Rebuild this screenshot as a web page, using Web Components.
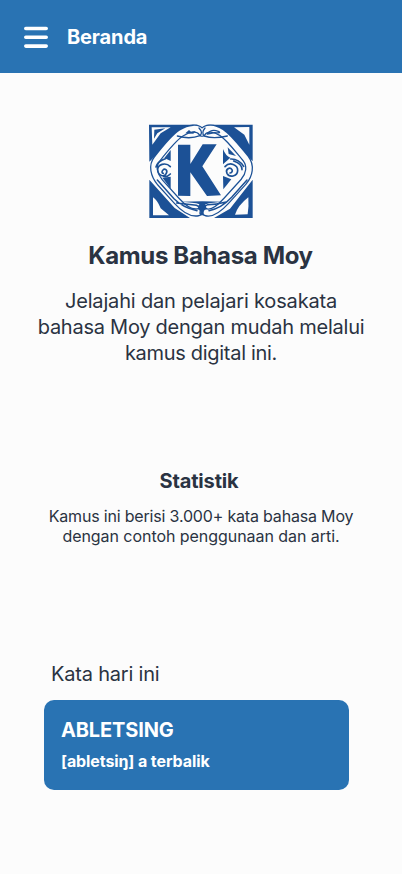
<!DOCTYPE html>
<html lang="id">
<head>
<meta charset="utf-8">
<title>Kamus Bahasa Moy</title>
<style>
body{margin:0;background:#fcfcfc;color:#2a3342;font-family:Inter,"Noto Sans",sans-serif}
</style>
</head>
<body>
<moy-app></moy-app>
<script>
const define=(name,html)=>customElements.define(name,class extends HTMLElement{
  constructor(){super();this.attachShadow({mode:'open'}).innerHTML=html;}
});

define('text-line',`<style>:host{display:block;white-space:nowrap}</style><slot></slot>`);

define('app-bar',`<style>
:host{display:flex;align-items:center;gap:19px;height:73px;padding-left:24px;box-sizing:border-box;background:#2973b3;color:#fff}
svg{display:block}
.t{font-size:20px;line-height:26px;font-weight:650;letter-spacing:-.14px}
</style>
<svg width="24" height="24" viewBox="0 0 24 24" stroke="#fff" stroke-width="3.6" stroke-linecap="round"><path d="M1.8 3.5H22.2M1.8 12.3H22.2M1.8 21.1H22.2"/></svg>
<div class="t"><slot></slot></div>`);

define('moy-logo',`<style>:host{display:block;width:124px;height:112px}svg{display:block}</style>
<svg width="124" height="112" viewBox="-3 -1 372 336" fill="none" stroke-linecap="round" stroke-linejoin="round">
<g fill="#1c5196">
<path d="M27 28H172L112 58L28 139Z"/>
<path d="M202 28H338V138L262 60Z"/>
<path d="M28 193L104 278L150 308H28Z"/>
<path d="M338 193V308H222L270 280Z"/>
</g>
<g fill="#fcfcfc">
<path d="M35 36H92L62 54L37 88Z"/><path d="M282 36L328 35V88L313 58Z"/>
<path d="M39 246Q52 254 62 279L87 300H39Z"/><path d="M325 246Q327 275 323 297L285 298Q294 270 325 246Z"/>
</g>
<path fill="#1c5196" d="M43 43L76 39L52 54L42 70Z"/>
<g transform="translate(11 0) scale(.94 1)">
<path d="M186 52C174 34 145 38 120 53C95 68 70 98 42 132C26 151 32 178 52 201L105 256C127 279 150 295 173 291C184 289 187 282 187 276M187 52C199 34 226 38 248 51C274 67 301 102 326 130C343 151 338 178 319 199L264 256C242 279 218 295 200 291C189 289 187 282 187 276" stroke="#1c5196" stroke-width="25"/>
<path d="M186 52C174 34 145 38 120 53C95 68 70 98 42 132C26 151 32 178 52 201L105 256C127 279 150 295 173 291M187 52C199 34 226 38 248 51C274 67 301 102 326 130C343 151 338 178 319 199L264 256C242 279 218 295 200 291" stroke="#fcfcfc" stroke-width="17"/>
</g>
<g stroke="#1c5196" stroke-width="4">
<path d="M112 62Q150 73 180 61Q190 52 177 38M262 62Q220 72 193 62Q183 53 195 38"/>
<path d="M202 56Q213 40 235 48Q246 54 224 52L202 56"/>
<path d="M52 194L102 250Q127 276 171 286M321 194L275 246Q243 280 207 286M259 260Q228 268 203 268Q187 274 184 296M110 263L169 270Q184 275 180 294" stroke-width="4.5"/>
</g>
<g fill="#1c5196">
<path d="M136 54L147 44L153 49L167 47L160 55Z"/>
<path d="M114 88H151V146L188 87H230L187 153L243 240L201 242L151 171V242L114 241Z"/>
<path d="M92 104V137L73 128Z"/><path d="M92 184V220L67 187Z"/>
<path d="M249 101Q257 122 271 127L249 147Z"/><path d="M249 182L274 192L250 222Z"/>
<path d="M263 96L288 122L266 116Z"/>
<path d="M124 259Q188 257 249 259Q215 262 207 264L188 270L169 264Q150 261 124 259Z"/>
</g>
<g stroke="#1c5196" stroke-width="5">
<path d="M91 154C77 139 52 147 53 164C54 181 73 187 79 174C84 164 74 158 69 164C64 169 66 174 70 174M91 176Q80 187 71 183"/>
<path d="M255 154C269 138 294 148 293 166C292 184 268 188 261 174C255 161 270 154 276 163C279 169 274 173 270 173M281 137Q307 146 306 163M272 131Q296 130 311 153"/>
<path d="M76 130Q52 138 48 155"/>
</g>
</svg>`);

define('word-card',`<style>
:host{display:block;box-sizing:border-box;width:305px;height:90px;border-radius:10px;background:#2973b3;color:#fff;padding:17px}
.w{font-size:20px;line-height:26px;font-weight:650;letter-spacing:-.15px}
.d{font-size:16px;line-height:20px;font-weight:650;letter-spacing:-.1px;margin-top:8px}
</style><div class="w"><slot name="word"></slot></div><div class="d"><slot></slot></div>`);

define('moy-app',`<style>
:host{display:block;height:874px;overflow:hidden}
main{display:flex;flex-direction:column;align-items:center;text-align:center;padding-top:42px}
h1{margin:14px 0 0;font-size:24px;line-height:30px;font-weight:700;letter-spacing:-.35px;padding-right:1px}
.lead{margin-top:17px;font-size:20px;line-height:26px}
.lead text-line:nth-child(1){letter-spacing:-.17px}
.lead text-line:nth-child(2){letter-spacing:-.25px}
.lead text-line:nth-child(3){letter-spacing:-.3px}
h2{margin:102px 0 0;font-size:20px;line-height:26px;font-weight:700;letter-spacing:-.15px;padding-right:4px}
.stat{margin-top:12px;font-size:16px;line-height:20px}
.stat text-line:first-child{letter-spacing:-.18px}
.stat text-line:last-child{letter-spacing:-.05px}
.day{align-self:stretch;text-align:left;padding-left:44px;margin-top:115px}
.label{font-size:20px;line-height:26px;letter-spacing:-.2px;padding-left:7px;margin-bottom:13px}
</style>
<app-bar><text-line>Beranda</text-line></app-bar>
<main>
<moy-logo></moy-logo>
<h1><text-line>Kamus Bahasa Moy</text-line></h1>
<div class="lead"><text-line>Jelajahi dan pelajari kosakata</text-line><text-line>bahasa Moy dengan mudah melalui</text-line><text-line>kamus digital ini.</text-line></div>
<h2><text-line>Statistik</text-line></h2>
<div class="stat"><text-line>Kamus ini berisi 3.000+ kata bahasa Moy</text-line><text-line>dengan contoh penggunaan dan arti.</text-line></div>
<section class="day"><div class="label"><text-line>Kata hari ini</text-line></div>
<word-card><text-line slot="word">ABLETSING</text-line><text-line>[abletsiŋ] a terbalik</text-line></word-card></section>
</main>`);
</script>
</body>
</html>
